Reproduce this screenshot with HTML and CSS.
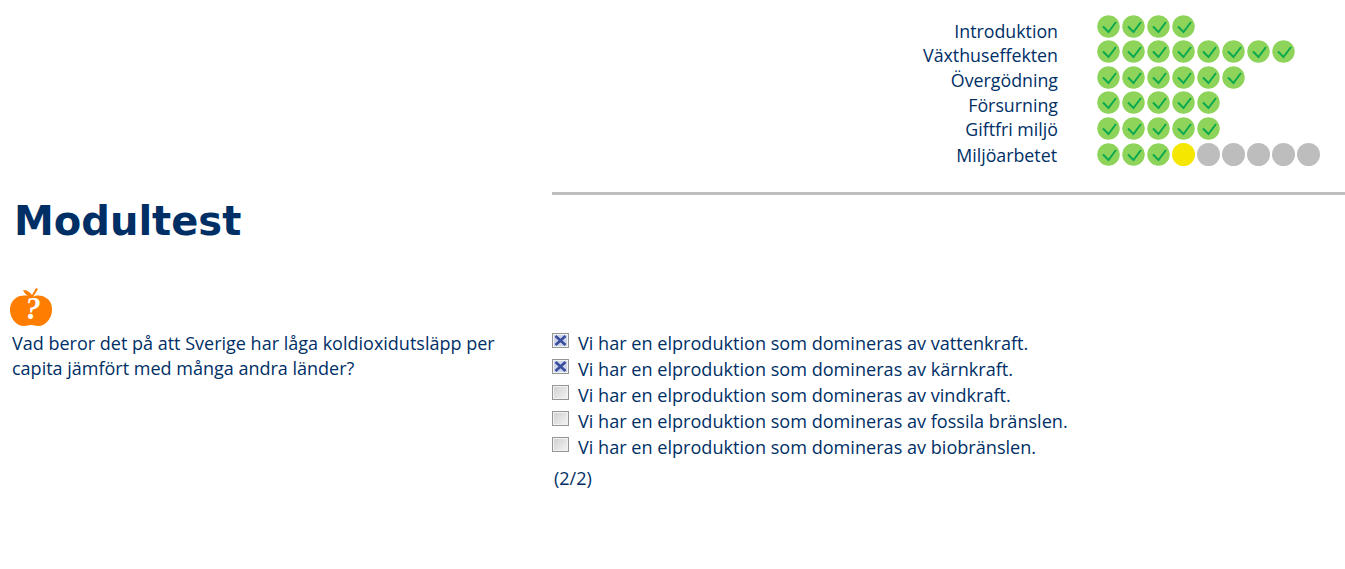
FILE: index.html
```html
<!DOCTYPE html>
<html lang="sv">
<head>
  <meta charset="UTF-8" />
  <meta name="viewport" content="width=device-width, initial-scale=1.0"/>
  <title>Modultest</title>
  <link rel="stylesheet" href="styles.css">
</head>
<body>
  <svg class="defs" width="0" height="0">
    <symbol id="done" viewBox="0 0 23 23">
      <circle cx="11.5" cy="11.5" r="11.3" fill="#8fd45a"/>
      <path d="M6 11.500l5.500 5.500 7.500-10" fill="none" stroke="#0aa84f" stroke-width="2"/>
    </symbol>
    <symbol id="cross" viewBox="0 0 15 13">
      <path d="M2.500 2l10 9M12.500 2l-10 9" fill="none" stroke="#3a4c9c" stroke-width="2.600"/>
    </symbol>
  </svg>

  <div class="progress">
    <div class="module-names">
      <span>Introduktion</span>
      <span>Växthuseffekten</span>
      <span>Övergödning</span>
      <span>Försurning</span>
      <span>Giftfri miljö</span>
      <span>Miljöarbetet</span>
    </div>
    <div class="module-dots">
      <div class="dots" data-done="4"></div>
      <div class="dots" data-done="8"></div>
      <div class="dots" data-done="6"></div>
      <div class="dots" data-done="5"></div>
      <div class="dots" data-done="5"></div>
      <div class="dots" data-done="3" data-current="1" data-todo="5"></div>
    </div>
  </div>

  <hr class="divider">

  <h1>Modultest</h1>

  <div class="test">
    <div class="question">
      <svg class="apple" width="44" height="38" viewBox="0 0 44 38">
        <path d="M21 9C17 7 10 7 6 10 1 13 0 19 0 22c0 8 6 16 14 16 3 0 4-1 7-1s4 1 7 1c8 0 14-8 14-16 0-6-2-10-6-12-4-3-10-3-13-1l5-8-2-1-4 7c-2-3-5-5-9-5 1 3 4 6 8 7z" fill="#ff7d00"/>
        <text class="apple-mark" x="23" y="31" text-anchor="middle">?</text>
      </svg>
      <p>Vad beror det på att Sverige har låga koldioxidutsläpp per capita jämfört med många andra länder?</p>
    </div>
    <div class="answers">
      <label class="answer"><span class="box checked"><svg width="15" height="13"><use href="#cross"/></svg></span>Vi har en elproduktion som domineras av vattenkraft.</label>
      <label class="answer"><span class="box checked"><svg width="15" height="13"><use href="#cross"/></svg></span>Vi har en elproduktion som domineras av kärnkraft.</label>
      <label class="answer"><span class="box"></span>Vi har en elproduktion som domineras av vindkraft.</label>
      <label class="answer"><span class="box"></span>Vi har en elproduktion som domineras av fossila bränslen.</label>
      <label class="answer"><span class="box"></span>Vi har en elproduktion som domineras av biobränslen.</label>
      <p class="score">(2/2)</p>
    </div>
  </div>

  <script>
    document.querySelectorAll('.dots').forEach(row => {
      let html = '';
      for (let i = 0; i < Number(row.dataset.done); i++) {
        html += '<svg class="dot" width="23" height="23"><use href="#done"/></svg>';
      }
      if (row.dataset.current) {
        html += '<span class="dot current"></span>';
      }
      for (let i = 0; i < Number(row.dataset.todo || 0); i++) {
        html += '<span class="dot todo"></span>';
      }
      row.innerHTML = html;
    });
  </script>
</body>
</html>
```

FILE: styles.css
```css
body {
  margin: 0;
  font-family: "Open Sans", sans-serif;
  font-size: 18px;
  color: #002f66;
  background-color: #fff;
  overflow: hidden;
}

.defs {
  display: block;
  height: 0;
}

.progress {
  display: flex;
  height: 177px;
}

.module-names {
  width: 1058px;
  padding-top: 18.5px;
  display: flex;
  flex-direction: column;
  align-items: flex-end;
  font-size: 17.8px;
  line-height: 24.7px;
  white-space: nowrap;
}

.module-names span:last-child {
  margin-top: 1px;
  padding-right: 1px;
}

.module-dots {
  margin-left: 39px;
  padding-top: 14.6px;
  display: flex;
  flex-direction: column;
  gap: 2.6px;
}

.dots {
  display: flex;
  gap: 2px;
  height: 23px;
}

.dot {
  display: block;
  width: 23px;
  height: 23px;
  border-radius: 50%;
}

.current {
  background-color: #f6e700;
}

.todo {
  background-color: #bdbdbd;
}

.divider {
  margin: 15px 0 0 552px;
  border: none;
  height: 3px;
  background-color: #bfbfbf;
}

h1 {
  margin: 0;
  padding: 1px 0 0 14px;
  height: 92px;
  font-family: "DejaVu Sans", sans-serif;
  font-size: 40px;
  font-weight: bold;
  line-height: 50px;
}

.test {
  display: flex;
}

.question {
  width: 552px;
  flex-shrink: 0;
  box-sizing: border-box;
  padding-left: 12px;
  padding-right: 40px;
}

.apple {
  display: block;
  margin-left: -2px;
}

.apple-mark {
  font-family: "Liberation Serif", serif;
  font-size: 31px;
  font-weight: bold;
  font-style: italic;
  fill: #fff;
}

.question p {
  margin: 5px 0 0 0;
  line-height: 25px;
}

.answers {
  padding-top: 42px;
}

.answer {
  display: flex;
  align-items: center;
  height: 26px;
  font-size: 18.1px;
  white-space: nowrap;
}

.box {
  width: 15px;
  height: 13px;
  margin: -6px 9px 0 0;
  border: 1px solid #959595;
  box-shadow: inset 0 0 0 1px #f2f2f2;
  background: linear-gradient(135deg, #cfcfcf, #f4f4f4);
  flex-shrink: 0;
}

.box.checked {
  background: #cdd5ea;
}

.box svg {
  display: block;
}

.score {
  margin: 6px 0 0 2px;
  line-height: 25px;
}
```
